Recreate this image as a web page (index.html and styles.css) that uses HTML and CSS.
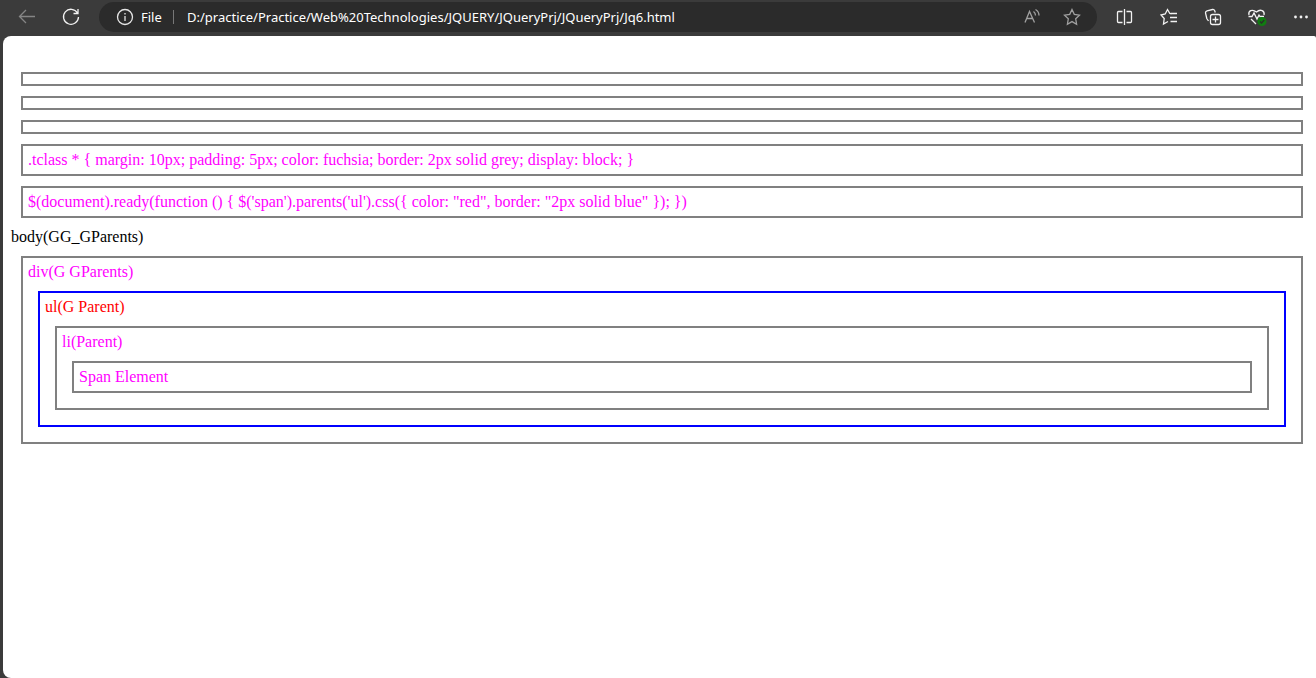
FILE: index.html
```html
<!DOCTYPE html>
<html lang="en">
<head>
<meta charset="utf-8">
<title>Jq6.html</title>
<link rel="stylesheet" href="styles.css">
</head>
<body>
<header class="toolbar">
  <nav class="nav">
    <button class="tool dim" aria-label="Back"><svg width="18" height="18" viewBox="0 0 18 18"><path d="M8 2 1.500 8.500 8 15M1.500 8.500H17"/></svg></button>
    <button class="tool" aria-label="Refresh"><svg width="18" height="18" viewBox="0 0 18 18"><path d="M15.500 5A7.500 7.500 0 1 0 16.500 9M16 1v4.500h-4.500"/></svg></button>
  </nav>
  <div class="address">
    <svg class="info" width="18" height="18" viewBox="0 0 18 18"><circle cx="9" cy="9" r="7.500"/><path d="M9 8v5M9 5v1.500"/></svg>
    <label class="scheme" for="url">File</label>
    <input class="url" id="url" type="text" spellcheck="false" value="D:/practice/Practice/Web%20Technologies/JQUERY/JQueryPrj/JQueryPrj/Jq6.html">
    <button class="tool muted" aria-label="Read aloud"><svg width="18" height="18" viewBox="0 0 18 18"><path d="M2 14.500 6.500 3.500 11.500 14.500M3.700 10.500h6M10.500 3.500q2 1.500 2 4M12.500 1.500q3.500 2 3.500 6"/></svg></button>
    <button class="tool muted" aria-label="Add to favorites"><svg width="18" height="18" viewBox="0 0 18 18"><path d="m9 1.500 2.300 4.900 5.200.7-3.800 3.700.9 5.400L9 13.600l-4.600 2.600.9-5.400L1.500 7.100l5.200-.7z"/></svg></button>
  </div>
  <div class="actions">
    <button class="tool" aria-label="Split screen"><svg width="18" height="18" viewBox="0 0 18 18"><path d="M6.500 3.500h-4a1 1 0 0 0-1 1v9a1 1 0 0 0 1 1h4M10.500 3.500h4a1 1 0 0 1 1 1v9a1 1 0 0 1-1 1h-4M8.500 1v16"/></svg></button>
    <button class="tool" aria-label="Favorites"><svg width="18" height="18" viewBox="0 0 18 18"><path d="M11.500 5.800 9.800 5.500 7.500 1.500 5.200 6 1 7l3.200 3.500L3.500 16 8 13.500M10.500 5.500H17M10 9.500h7M10.500 13.500H17"/></svg></button>
    <button class="tool" aria-label="Collections"><svg width="18" height="18" viewBox="0 0 18 18"><path d="M4.500 13 2.800 10.500 1.500 4.800a2 2 0 0 1 1.500-2L8.500 1.500a2 2 0 0 1 2.200 1.200l.6 1.800"/><rect x="6.500" y="6.500" width="10" height="10" rx="2"/><path d="M11.500 8.500v6M8.500 11.500h6"/></svg></button>
    <button class="tool" aria-label="Browser essentials"><svg width="20" height="18" viewBox="0 0 20 18"><path d="M2 7C1 3 5 .5 9.500 4c4-3.500 8.500-1 7.500 3M1.500 8.500H5L7 5l3 6 2-4 1 1.500h4M4 11l5 5"/><circle class="badge" cx="15" cy="13.500" r="4.500"/><path class="check" d="m13 13.500 1.500 1.500 2.800-3"/></svg></button>
    <button class="tool" aria-label="Settings and more"><svg width="18" height="18" viewBox="0 0 18 18"><g class="dots"><circle cx="3.500" cy="9" r="1.400"/><circle cx="9" cy="9" r="1.400"/><circle cx="14.500" cy="9" r="1.400"/></g></svg></button>
  </div>
</header>
<main class="page">
  <div class="box"></div>
  <div class="box"></div>
  <div class="box"></div>
  <div class="box">.tclass * { margin: 10px; padding: 5px; color: fuchsia; border: 2px solid grey; display: block; }</div>
  <div class="box">$(document).ready(function () { $('span').parents('ul').css({ color: "red", border: "2px solid blue" }); })</div>
  body(GG_GParents)
  <div class="box">div(G GParents)
    <ul class="box highlighted">ul(G Parent)
      <li class="box">li(Parent)
        <span class="box">Span Element</span>
      </li>
    </ul>
  </div>
</main>
</body>
</html>
```
FILE: styles.css
```css
* {
  box-sizing: border-box;
}

body {
  margin: 0;
  min-height: 100vh;
  display: flex;
  flex-direction: column;
  background: #3b3b3b;
}

.toolbar {
  display: flex;
  align-items: center;
  height: 36px;
  padding: 0 1px 2px 13px;
  font-family: "Noto Sans", "Open Sans", sans-serif;
  font-size: 13px;
  color: #fff;
}

.nav,
.actions {
  display: flex;
  gap: 16px;
}

.tool {
  display: flex;
  align-items: center;
  justify-content: center;
  width: 28px;
  height: 28px;
  padding: 0;
  border: 0;
  background: none;
  color: #f2f2f2;
}

.dim {
  color: #858585;
}

.muted {
  color: #a0a0a0;
}

svg {
  flex: none;
  fill: none;
  stroke: currentColor;
  stroke-width: 1.3;
}

.badge {
  fill: #107c10;
  stroke: none;
}

.check {
  stroke: #2b2b2b;
}

.dots {
  fill: currentColor;
  stroke: none;
}

.address {
  flex: 1;
  display: flex;
  align-items: center;
  height: 30px;
  margin: 0 14px;
  padding: 0 11px 0 17px;
  border-radius: 15px;
  background: #2b2b2b;
}

.address .tool + .tool {
  margin-left: 12px;
}

.info {
  color: #e6e6e6;
}

.scheme {
  width: 33px;
  margin-left: 7px;
  border-right: 1px solid #777;
  line-height: 14px;
}

.url {
  flex: 1;
  min-width: 0;
  padding: 0 0 0 13px;
  border: 0;
  background: none;
  color: #fff;
  font: inherit;
}

.page {
  flex: 1;
  margin-left: 3px;
  padding: 26px 3px 8px 8px;
  border-radius: 8px 2px 0 8px;
  background: #fff;
  color: #000;
  font-family: "Liberation Serif", "Times New Roman", serif;
  font-size: 16px;
  line-height: 18px;
}

.box {
  display: block;
  margin: 10px;
  padding: 5px;
  border: 2px solid grey;
  color: fuchsia;
}

.box.highlighted {
  border-color: blue;
  color: red;
}
```
